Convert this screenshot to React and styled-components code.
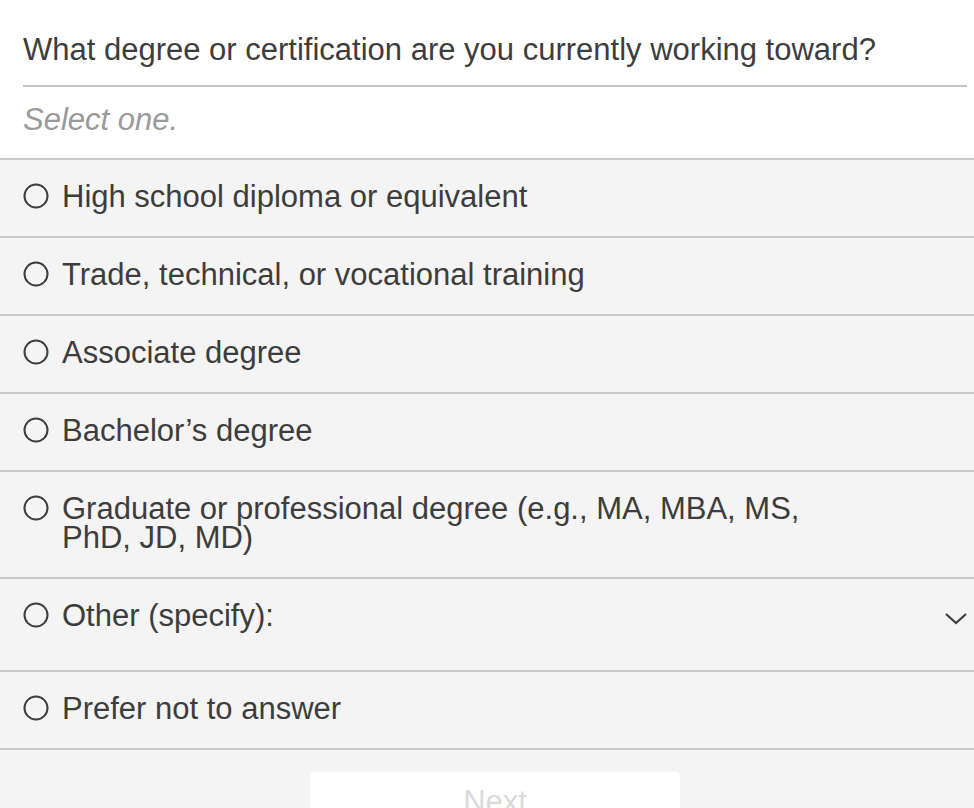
import React from "react";
import styled, { createGlobalStyle } from "styled-components";

const options = [
  { id: 1, label: "High school diploma or equivalent" },
  { id: 2, label: "Trade, technical, or vocational training" },
  { id: 3, label: "Associate degree" },
  { id: 4, label: "Bachelor’s degree" },
  { id: 5, label: "Graduate or professional degree (e.g., MA, MBA, MS, PhD, JD, MD)" },
  { id: 6, label: "Other (specify):", other: true },
  { id: 7, label: "Prefer not to answer" },
];

const GlobalStyle = createGlobalStyle`
  body {
    margin: 0;
    background: #f4f4f4;
    font-family: "Liberation Sans", Arial, sans-serif;
    color: #3d3d3d;
  }
`;

const Radio = () => (
  <RadioIcon width="26" height="26" viewBox="0 0 26 26">
    <circle cx="13" cy="13" r="11.5" fill="none" stroke="#3d3d3d" strokeWidth="2" />
  </RadioIcon>
);

const Chevron = () => (
  <ChevronIcon width="24" height="14" viewBox="0 0 24 14">
    <polyline points="2,2 12,11 22,2" fill="none" stroke="#3d3d3d" strokeWidth="2.2" />
  </ChevronIcon>
);

const App = () => {
  return (
    <>
      <GlobalStyle />
      <Wrapper>
        <Header>
          <Question>What degree or certification are you currently working toward?</Question>
          <Hint>Select one.</Hint>
        </Header>
        <OptionList>
          {options.map((item) => (
            <Option key={item.id} $other={item.other}>
              <Radio />
              <Label>{item.label}</Label>
              {item.other && <Chevron />}
            </Option>
          ))}
        </OptionList>
        <Footer>
          <NextButton disabled>Next</NextButton>
        </Footer>
      </Wrapper>
    </>
  );
};

const Wrapper = styled.main`
  width: 974px;
  height: 808px;
  overflow: hidden;
  background: #f4f4f4;
`;

const Header = styled.header`
  background: #fff;
  padding: 34px 7px 23px 23px;
  border-bottom: 2px solid #c8c8c8;
`;

const Question = styled.h1`
  margin: 0;
  font-size: 31px;
  font-weight: 400;
  line-height: 31px;
  padding-bottom: 20px;
  border-bottom: 2px solid #c6c6c6;
  color: #3d3d3d;
`;

const Hint = styled.p`
  margin: 17px 0 0;
  font-size: 31px;
  line-height: 31px;
  font-style: italic;
  color: #9a9a9a;
`;

const OptionList = styled.ul`
  list-style: none;
  margin: 0;
  padding: 0;
`;

const Option = styled.li`
  display: flex;
  align-items: flex-start;
  padding: 22px 6px ${(p) => (p.$other ? "40px" : "25px")} 23px;
  border-bottom: 2px solid #c8c8c8;
  font-size: 31px;
  line-height: 29px;
`;

const RadioIcon = styled.svg`
  flex: none;
  margin-top: 1px;
  margin-right: 13px;
`;

const Label = styled.span`
  flex: 0 1 auto;
  max-width: 780px;
`;

const ChevronIcon = styled.svg`
  flex: none;
  margin-left: auto;
  margin-top: 11px;
`;

const Footer = styled.div`
  display: flex;
  justify-content: center;
  padding: 22px 7px 0 23px;
`;

const NextButton = styled.button`
  width: 370px;
  height: 60px;
  border: none;
  border-radius: 5px;
  background: #fff;
  font-family: "Liberation Sans", Arial, sans-serif;
  font-size: 31px;
  color: #dadada;
  padding: 0;
`;

export default App;
